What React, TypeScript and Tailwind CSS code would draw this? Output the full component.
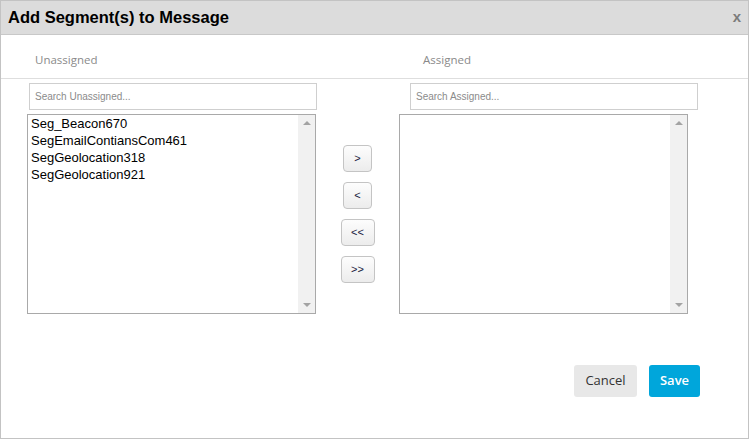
import React from 'react';

const unassigned = ['Seg_Beacon670', 'SegEmailContiansCom461', 'SegGeolocation318', 'SegGeolocation921'];

function ListBox({ items }: { items: string[] }) {
  return (
    <div className="flex h-[200px] w-[289px] border border-[#a9a9a9] bg-white">
      <div className="flex-1 pl-[3px] font-['Liberation_Sans',Arial,sans-serif] text-[13px] leading-[17px] text-black">
        {items.map((s) => (
          <div key={s}>{s}</div>
        ))}
      </div>
      <div className="flex w-[17px] flex-col items-center justify-between bg-[#f1f1f1] py-[6px]">
        <div className="h-0 w-0 border-x-[4px] border-b-[4px] border-x-transparent border-b-[#a3a3a3]" />
        <div className="h-0 w-0 border-x-[4px] border-t-[4px] border-x-transparent border-t-[#a3a3a3]" />
      </div>
    </div>
  );
}

function MoveButton({ label, wide }: { label: string; wide?: boolean }) {
  return (
    <button
      className={`flex h-[27px] items-center justify-center rounded-[4px] border border-[#c4c4c4] bg-gradient-to-b from-[#fdfdfd] to-[#ececec] font-['Liberation_Sans',Arial,sans-serif] text-[11px] text-[#1a1a40] ${
        wide ? 'w-[34px]' : 'w-[29px]'
      }`}
    >
      {label}
    </button>
  );
}

export default function App() {
  return (
    <div className="h-[439px] w-[749px] border border-[#c3c3c3] bg-white">
      {/* header */}
      <div className="flex h-[34px] items-center justify-between border-b border-[#c8c8c8] bg-[#dcdcdc] pl-[7px] pr-[7px]">
        <span className="font-['Liberation_Sans',Arial,sans-serif] text-[16.5px] font-bold text-black">
          Add Segment(s) to Message
        </span>
        <span className="font-['Liberation_Sans',Arial,sans-serif] text-[15px] font-bold text-[#7b7b7b]">x</span>
      </div>

      {/* labels */}
      <div className="flex h-[44px] items-center border-b border-[#dedede] pt-[6px] font-['Open_Sans',sans-serif] text-[11.5px] text-[#8a8a8a]">
        <span className="ml-[34px] w-[388px]">Unassigned</span>
        <span>Assigned</span>
      </div>

      {/* pick lists */}
      <div className="flex pt-[4px]">
        <div className="ml-[26px] flex w-[289px] flex-col gap-[4px]">
          <input
            placeholder="Search Unassigned..."
            className="ml-[2px] h-[27px] w-[288px] border border-[#cfcfcf] px-[5px] font-['Liberation_Sans',Arial,sans-serif] text-[10px] outline-none placeholder:text-[#8b8b8b]"
          />
          <ListBox items={unassigned} />
        </div>

        <div className="flex w-[83px] flex-col items-center gap-[10px] pt-[62px]">
          <MoveButton label=">" />
          <MoveButton label="<" />
          <MoveButton label="<<" wide />
          <MoveButton label=">>" wide />
        </div>

        <div className="flex w-[300px] flex-col gap-[4px]">
          <input
            placeholder="Search Assigned..."
            className="ml-[11px] h-[27px] w-[288px] border border-[#cfcfcf] px-[5px] font-['Liberation_Sans',Arial,sans-serif] text-[10px] outline-none placeholder:text-[#8b8b8b]"
          />
          <ListBox items={[]} />
        </div>
      </div>

      {/* footer */}
      <div className="mt-[51px] flex justify-end gap-[12px] pr-[48px] font-['Open_Sans',sans-serif] text-[13px]">
        <button className="h-[32px] w-[63px] rounded-[3px] bg-[#e8e8e8] text-[#333]">Cancel</button>
        <button className="h-[32px] w-[51px] rounded-[3px] bg-[#00a6db] font-semibold text-white">Save</button>
      </div>
    </div>
  );
}
